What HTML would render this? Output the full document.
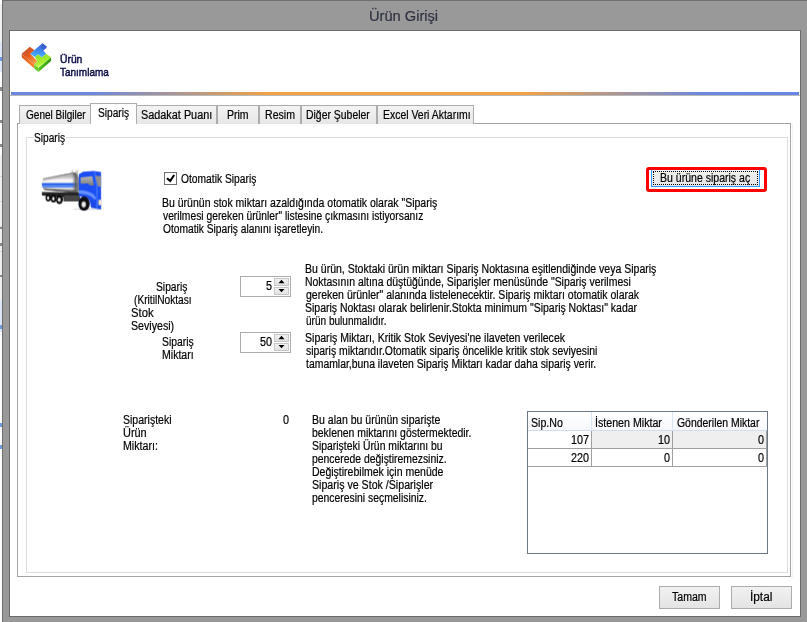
<!DOCTYPE html>
<html lang="tr"><head><meta charset="utf-8"><title>Ürün Girişi</title>
<style>
html,body{margin:0;padding:0}
body{width:807px;height:622px;overflow:hidden;position:relative;background:#999;font:12px/14px "Liberation Sans",sans-serif;color:#000}
div,span,svg{position:absolute;box-sizing:border-box}
.t{white-space:nowrap;transform-origin:0 0;-webkit-text-stroke:0.2px}
.tab{top:105px;height:19px;border:1px solid #acacac;border-bottom:none;background:linear-gradient(#f3f3f3,#e6e6e6)}
.btn{border:1px solid #acacac;background:linear-gradient(#f1f1f1,#e4e4e4)}
.spin{width:51px;height:21px;left:240px;border:1px solid #abadb3;background:#fff}
.sb{left:274px;width:15px;height:8px;background:linear-gradient(#f0f0f0,#e3e3e3);border:1px solid #c6c6c6}
.vl{width:1px;background:#a0a0a0}.hl{height:1px;background:#a0a0a0}
</style></head><body>
<!--STATIC-START-->
<div style="left:0;top:0px;width:2px;height:622px;background:#fff"></div>
<div style="left:0;top:4px;width:2px;height:38px;background:#f0f0f0"></div>
<div style="left:0;top:42px;width:2px;height:30px;background:#dde7f7"></div>
<div style="left:0;top:57px;width:2px;height:4px;background:#6f9be4"></div>
<div style="left:0;top:87px;width:2px;height:4px;background:#8a8a8a"></div>
<div style="left:0;top:120px;width:2px;height:3px;background:#8a8a8a"></div>
<div style="left:0;top:144px;width:2px;height:3px;background:#8a8a8a"></div>
<div style="left:0;top:155px;width:2px;height:145px;background:#efefef"></div>
<div style="left:0;top:176px;width:2px;height:1px;background:#d4d4d4"></div>
<div style="left:0;top:201px;width:2px;height:1px;background:#d4d4d4"></div>
<div style="left:0;top:226px;width:2px;height:1px;background:#d4d4d4"></div>
<div style="left:0;top:251px;width:2px;height:1px;background:#d4d4d4"></div>
<div style="left:0;top:276px;width:2px;height:1px;background:#d4d4d4"></div>
<div style="left:0;top:227px;width:2px;height:2px;background:#8a8a8a"></div>
<div style="left:0;top:243px;width:2px;height:3px;background:#8a8a8a"></div>
<div style="left:0;top:275px;width:2px;height:2px;background:#8a8a8a"></div>
<div style="left:0;top:300px;width:2px;height:32px;background:#dde7f7"></div>
<div style="left:0;top:325px;width:2px;height:4px;background:#6f9be4"></div>
<div style="left:0;top:423px;width:2px;height:4px;background:#6f9be4"></div>
<div style="left:0;top:445px;width:2px;height:4px;background:#6f9be4"></div>
<div style="left:2px;top:0;width:1px;height:622px;background:#6e6e6e"></div>
<div style="left:2px;top:0;width:805px;height:1px;background:#707070"></div>
<div id="client" style="left:9px;top:30px;width:792px;height:587px;border:1px solid #6b6b6b;background:#fff"></div>
<svg id="logo" style="left:16px;top:38px" width="40" height="40" viewBox="0 0 622 622">
<defs>
<linearGradient id="lr" x1="0" y1="0" x2="1" y2="1"><stop offset="0" stop-color="#b45a48"/><stop offset=".45" stop-color="#e2581a"/><stop offset="1" stop-color="#ffae5c"/></linearGradient>
<linearGradient id="lrs" x1="0" y1="0" x2="1" y2="1"><stop offset="0" stop-color="#d8501c"/><stop offset="1" stop-color="#ff8a30"/></linearGradient>
<linearGradient id="lb" x1="0.6" y1="0" x2="0.4" y2="1"><stop offset="0" stop-color="#3b5fd0"/><stop offset=".5" stop-color="#3f86f0"/><stop offset="1" stop-color="#4cb4ff"/></linearGradient>
<linearGradient id="lg" x1="0.2" y1="0" x2="0.6" y2="1"><stop offset="0" stop-color="#8adf28"/><stop offset=".6" stop-color="#a8ee30"/><stop offset="1" stop-color="#d8ff90"/></linearGradient>
<linearGradient id="lgs" x1="0" y1="0" x2="1" y2="0"><stop offset="0" stop-color="#55c41c"/><stop offset="1" stop-color="#2f9810"/></linearGradient>
<filter id="lbl"><feGaussianBlur stdDeviation="5"/></filter>
</defs>
<g filter="url(#lbl)">
<polygon points="88,245 285,412 285,474 92,302" fill="url(#lrs)"/>
<polygon points="88,245 215,135 290,190 222,243 335,360 285,412" fill="url(#lr)"/>
<polygon points="285,412 350,462 350,528 285,474" fill="#62cc22"/>
<polygon points="350,462 545,300 545,356 350,528" fill="url(#lgs)"/>
<polygon points="345,252 400,300 468,243 545,300 350,462 285,412 335,360 292,296" fill="url(#lg)"/>
<polygon points="410,82 482,135 425,195 468,243 400,300 345,252 292,296 222,243" fill="url(#lb)"/>
<polygon points="410,82 482,135 470,160 425,195 400,150" fill="#3555c4" opacity=".6"/>
</g>
</svg>
<div style="left:11px;top:92px;width:788px;height:3px;background:linear-gradient(90deg,#6a88e0 0%,#6a88e0 10%,#f2a242 33%,#f2a242 65%,#6a88e0 88%,#6586e6 100%)"></div>
<div style="left:10px;top:95px;width:790px;height:1px;background:#b9b9b9"></div>
<div style="left:792px;top:124px;width:1px;height:454px;background:#f3f3f3"></div>
<div id="page" style="left:17px;top:123px;width:774px;height:454px;border:1px solid #a3a3a3;background:#fff"></div>
<div class="tab" style="left:19px;width:73px"></div>
<div class="tab" style="left:135px;width:82px"></div>
<div class="tab" style="left:217px;width:42px"></div>
<div class="tab" style="left:259px;width:42px"></div>
<div class="tab" style="left:301px;width:76px"></div>
<div class="tab" style="left:377px;width:97px"></div>
<div id="seltab" style="left:90px;top:103px;width:47px;height:21px;border:1px solid #acacac;border-bottom:none;background:#fff"></div>
<div id="group" style="left:26px;top:137px;width:762px;height:436px;border:1px solid #dcdcdc"></div>
<div style="left:34px;top:137px;width:32px;height:1px;background:#fff"></div>
<svg id="truck" style="left:38px;top:162px" width="70" height="54" viewBox="0 0 806 622">
<defs>
<clipPath id="tc"><rect x="0" y="0" width="726" height="622"/></clipPath>
<linearGradient id="tk" x1="0" y1="0" x2="0" y2="1"><stop offset="0" stop-color="#5e5e5e"/><stop offset=".1" stop-color="#8e8e8e"/><stop offset=".22" stop-color="#c2c2c2"/><stop offset=".38" stop-color="#fbfbfb"/><stop offset=".5" stop-color="#f2f2f2"/><stop offset=".54" stop-color="#2b66ee"/><stop offset=".6" stop-color="#1e56e6"/><stop offset=".66" stop-color="#78a4f8"/><stop offset=".71" stop-color="#2a62ea"/><stop offset=".77" stop-color="#f8f8f8"/><stop offset=".86" stop-color="#9a9a9a"/><stop offset="1" stop-color="#1a1a1a"/></linearGradient>
<linearGradient id="te" x1="0" y1="0" x2="1" y2="0"><stop offset="0" stop-color="#777" stop-opacity="0"/><stop offset=".5" stop-color="#5a5a5a" stop-opacity=".85"/><stop offset="1" stop-color="#8a8a8a" stop-opacity=".95"/></linearGradient>
<linearGradient id="cb" x1="0" y1="0" x2="0" y2="1"><stop offset="0" stop-color="#1c4ef0"/><stop offset=".5" stop-color="#1d50f6"/><stop offset="1" stop-color="#1a48e0"/></linearGradient>
<linearGradient id="wn" x1="0" y1="0" x2="0" y2="1"><stop offset="0" stop-color="#b8b8b8"/><stop offset="1" stop-color="#7c7c7c"/></linearGradient>
<radialGradient id="hb"><stop offset="0" stop-color="#fff"/><stop offset=".55" stop-color="#e4e4e4"/><stop offset="1" stop-color="#666"/></radialGradient>
<filter id="tbl"><feGaussianBlur stdDeviation="3.2"/></filter>
</defs>
<g clip-path="url(#tc)" filter="url(#tbl)">
<ellipse cx="560" cy="545" rx="160" ry="14" fill="#000" opacity=".10"/>
<polygon points="45,345 480,350 480,452 292,452 292,405 45,385" fill="#262626"/>
<polygon points="300,385 470,385 470,452 300,452" fill="#474747"/>
<rect x="386" y="86" width="76" height="54" rx="8" fill="#c4c4c4"/><rect x="400" y="90" width="34" height="46" fill="#f0f0f0"/>
<ellipse cx="424" cy="94" rx="36" ry="8" fill="#fafafa"/>
<path d="M72,183 L400,122 Q472,114 472,230 L472,335 Q462,358 400,352 L75,320 Q44,300 44,252 Q44,200 72,183Z" fill="url(#tk)"/>
<polygon points="58,190 400,120 400,136 58,204" fill="#868686" opacity=".9"/><polygon points="52,204 400,136 400,156 50,220" fill="#bdbdbd" opacity=".85"/><polygon points="60,306 400,334 400,354 75,322" fill="#4a4a4a" opacity=".9"/><polygon points="50,292 400,316 400,334 60,306" fill="#a2a2a2" opacity=".8"/>
<path d="M390,124 Q472,114 472,230 L472,335 Q462,358 390,352Z" fill="url(#te)"/>
<ellipse cx="118" cy="412" rx="32" ry="44" fill="#0c0c0c"/><ellipse cx="116" cy="414" rx="15" ry="24" fill="url(#hb)"/>
<ellipse cx="178" cy="420" rx="34" ry="46" fill="#0c0c0c"/><ellipse cx="176" cy="422" rx="16" ry="25" fill="url(#hb)"/>
<ellipse cx="246" cy="432" rx="40" ry="54" fill="#0c0c0c"/><ellipse cx="244" cy="434" rx="19" ry="29" fill="url(#hb)"/>
<path d="M470,140 L520,112 L640,104 L726,114 L726,548 L610,528 L600,470 Q580,385 500,398 L470,400Z" fill="url(#cb)"/>
<path d="M470,325 Q560,320 640,370 Q665,390 668,430 L640,430 Q620,372 470,362Z" fill="#7ea6ff" opacity=".75"/>
<path d="M640,104 L660,112 L690,280 L690,540 L668,536 L668,290Z" fill="#3f74ff" opacity=".8"/>
<ellipse cx="530" cy="478" rx="66" ry="84" fill="#0d1230"/>
<ellipse cx="528" cy="487" rx="54" ry="68" fill="#0a0a0a"/><ellipse cx="526" cy="489" rx="30" ry="40" fill="url(#hb)"/>
<polygon points="490,178 624,164 644,266 602,270 572,246 490,250" fill="url(#wn)"/>
<polygon points="656,158 726,164 726,288 690,278" fill="#8e8e8e"/>
<rect x="696" y="436" width="30" height="60" fill="#f6e8c4"/>
</g>
</svg>
<div id="cb" style="left:164px;top:172px;width:13px;height:13px;border:1px solid #707070;background:#fff"></div>
<svg style="left:164px;top:172px" width="13" height="13" viewBox="0 0 13 13"><path d="M2.9 6.2 L6.2 8.9 L10.2 3" fill="none" stroke="#000" stroke-width="2.1"/></svg>
<div id="obtn" style="left:651px;top:169px;width:109px;height:18px;border:1px solid #3399ff;background:linear-gradient(#f0f0f0,#e6e6e6)"></div>
<div style="left:653px;top:171px;width:105px;height:14px;border:1px dotted #000"></div>
<div id="red" style="left:646px;top:167px;width:121px;height:25px;border:3px solid #ff0000;border-radius:3px"></div>
<div class="spin" style="top:276px"></div>
<div class="sb" style="top:278px"></div><div class="sb" style="top:287px"></div>
<svg style="left:274px;top:278px" width="15" height="17" viewBox="0 0 15 17"><path d="M7.5 1.8 L10.5 5.2 H4.5Z M4.5 10.9 H10.5 L7.5 14.3Z" fill="#000"/></svg>
<div class="spin" style="top:332px"></div>
<div class="sb" style="top:334px"></div><div class="sb" style="top:343px"></div>
<svg style="left:274px;top:334px" width="15" height="17" viewBox="0 0 15 17"><path d="M7.5 1.8 L10.5 5.2 H4.5Z M4.5 10.9 H10.5 L7.5 14.3Z" fill="#000"/></svg>
<div id="grid" style="left:527px;top:411px;width:241px;height:143px;border:1px solid #6f7887;background:#fff"></div>
<div style="left:528px;top:412px;width:239px;height:18px;background:linear-gradient(#fff,#f6f8fb)"></div>
<div style="left:528px;top:430px;width:239px;height:1px;background:#d4dfee"></div>
<div style="left:591px;top:412px;width:1px;height:19px;background:#dbe6f4"></div>
<div style="left:672px;top:412px;width:1px;height:19px;background:#dbe6f4"></div>
<div style="left:592px;top:431px;width:174px;height:17px;background:#efefef"></div>
<div class="hl" style="left:528px;top:448px;width:239px"></div>
<div class="hl" style="left:528px;top:466px;width:239px"></div>
<div class="vl" style="left:591px;top:431px;height:36px"></div>
<div class="vl" style="left:672px;top:431px;height:36px"></div>
<div class="vl" style="left:766px;top:431px;height:36px"></div>
<div class="btn" style="left:659px;top:586px;width:61px;height:23px"></div>
<div class="btn" style="left:731px;top:586px;width:61px;height:23px"></div>
<!--STATIC-END-->
<span class="t" id="title" style="left:369.30px;top:8px;font-size:14px;line-height:16px;color:#2f3242;transform:scaleX(1.0454)">Ürün Girişi</span>
<span class="t" id="h1" style="left:60.02px;top:53px;font-size:11px;line-height:13px;color:#0b0b45;-webkit-text-stroke:0.45px;transform:scaleX(0.9378)">Ürün</span>
<span class="t" id="h2" style="left:60.02px;top:66px;font-size:11px;line-height:13px;color:#0b0b45;-webkit-text-stroke:0.45px;transform:scaleX(0.9073)">Tanımlama</span>
<span class="t" id="tab1" style="left:25.62px;top:108px;transform:scaleX(0.8362)">Genel Bilgiler</span>
<span class="t" id="tab2" style="left:98.22px;top:106px;transform:scaleX(0.8476)">Sipariş</span>
<span class="t" id="tab3" style="left:140.55px;top:108px;transform:scaleX(0.9052)">Sadakat Puanı</span>
<span class="t" id="tab4" style="left:227.36px;top:108px;transform:scaleX(0.8770)">Prim</span>
<span class="t" id="tab5" style="left:265.02px;top:108px;transform:scaleX(0.8802)">Resim</span>
<span class="t" id="tab6" style="left:306.35px;top:108px;transform:scaleX(0.8696)">Diğer Şubeler</span>
<span class="t" id="tab7" style="left:383.02px;top:108px;transform:scaleX(0.8702)">Excel Veri Aktarımı</span>
<span class="t" id="gb" style="left:34.22px;top:131px;transform:scaleX(0.8476)">Sipariş</span>
<span class="t" id="chk" style="left:180.64px;top:172px;transform:scaleX(0.8559)">Otomatik Sipariş</span>
<span class="t" id="a1" style="left:162.30px;top:196px;transform:scaleX(0.8756)">Bu ürünün stok miktarı azaldığında otomatik olarak "Sipariş</span>
<span class="t" id="a2" style="left:163.02px;top:209px;transform:scaleX(0.8572)">verilmesi gereken ürünler" listesine çıkmasını istiyorsanız</span>
<span class="t" id="a3" style="left:163.02px;top:222px;transform:scaleX(0.8511)">Otomatik Sipariş alanını işaretleyin.</span>
<span class="t" id="btn" style="left:660.30px;top:171px;transform:scaleX(0.8778)">Bu ürüne sipariş aç</span>
<span class="t" id="l1" style="left:155.94px;top:280px;transform:scaleX(0.8566)">Sipariş</span>
<span class="t" id="l2" style="left:134.45px;top:293px;transform:scaleX(0.8477)">(KritilNoktası</span>
<span class="t" id="l3" style="left:130.74px;top:306px;transform:scaleX(0.9377)">Stok</span>
<span class="t" id="l4" style="left:130.74px;top:319px;transform:scaleX(0.8866)">Seviyesi)</span>
<span class="t" id="l5" style="left:161.94px;top:335px;transform:scaleX(0.8628)">Sipariş</span>
<span class="t" id="l6" style="left:162.30px;top:348px;transform:scaleX(0.8799)">Miktarı</span>
<span class="t" id="n1" style="left:266.45px;top:279px;transform:scaleX(0.9000)">5</span>
<span class="t" id="n2" style="left:260.19px;top:335px;transform:scaleX(0.9000)">50</span>
<span class="t" id="b1" style="left:305.40px;top:262px;transform:scaleX(0.8765)">Bu ürün, Stoktaki ürün miktarı Sipariş Noktasına eşitlendiğinde veya Sipariş</span>
<span class="t" id="b2" style="left:305.40px;top:275px;transform:scaleX(0.8715)">Noktasının altına düştüğünde, Siparişler menüsünde "Sipariş verilmesi</span>
<span class="t" id="b3" style="left:306.21px;top:288px;transform:scaleX(0.8755)">gereken ürünler" alanında listelenecektir. Sipariş miktarı otomatik olarak</span>
<span class="t" id="b4" style="left:305.22px;top:301px;transform:scaleX(0.8738)">Sipariş Noktası olarak belirlenir.Stokta minimum "Sipariş Noktası" kadar</span>
<span class="t" id="b5" style="left:306.21px;top:314px;transform:scaleX(0.8375)">ürün bulunmalıdır.</span>
<span class="t" id="c1" style="left:305.22px;top:331px;transform:scaleX(0.8793)">Sipariş Miktarı, Kritik Stok Seviyesi'ne ilaveten verilecek</span>
<span class="t" id="c2" style="left:306.21px;top:344px;transform:scaleX(0.8687)">sipariş miktarıdır.Otomatik sipariş öncelikle kritik stok seviyesini</span>
<span class="t" id="c3" style="left:306.21px;top:357px;transform:scaleX(0.8686)">tamamlar,buna ilaveten Sipariş Miktarı kadar daha sipariş verir.</span>
<span class="t" id="s1" style="left:122.74px;top:413px;transform:scaleX(0.8771)">Siparişteki</span>
<span class="t" id="s2" style="left:122.74px;top:426px;transform:scaleX(0.9114)">Ürün</span>
<span class="t" id="s3" style="left:122.74px;top:439px;transform:scaleX(0.8876)">Miktarı:</span>
<span class="t" id="s0" style="left:282.51px;top:413px;transform:scaleX(0.9000)">0</span>
<span class="t" id="d1" style="left:312.40px;top:413px;transform:scaleX(0.8783)">Bu alan bu ürünün siparişte</span>
<span class="t" id="d2" style="left:312.22px;top:426px;transform:scaleX(0.8689)">beklenen miktarını göstermektedir.</span>
<span class="t" id="d3" style="left:312.22px;top:439px;transform:scaleX(0.8669)">Siparişteki Ürün miktarını bu</span>
<span class="t" id="d4" style="left:312.04px;top:452px;transform:scaleX(0.8658)">pencerede değiştiremezsiniz.</span>
<span class="t" id="d5" style="left:312.40px;top:465px;transform:scaleX(0.8757)">Değiştirebilmek için menüde</span>
<span class="t" id="d6" style="left:312.22px;top:478px;transform:scaleX(0.8856)">Sipariş ve Stok /Siparişler</span>
<span class="t" id="d7" style="left:312.04px;top:491px;transform:scaleX(0.8655)">penceresini seçmelisiniz.</span>
<span class="t" id="th1" style="left:530.94px;top:416px;transform:scaleX(0.8834)">Sip.No</span>
<span class="t" id="th2" style="left:594.60px;top:416px;transform:scaleX(0.8878)">İstenen Miktar</span>
<span class="t" id="th3" style="left:676.62px;top:416px;transform:scaleX(0.8699)">Gönderilen Miktar</span>
<span class="t" id="r11" style="left:570.60px;top:433px;transform:scaleX(0.9000)">107</span>
<span class="t" id="r12" style="left:658.05px;top:433px;transform:scaleX(0.9000)">10</span>
<span class="t" id="r13" style="left:758.29px;top:433px;transform:scaleX(0.9000)">0</span>
<span class="t" id="r21" style="left:570.93px;top:451px;transform:scaleX(0.9000)">220</span>
<span class="t" id="r22" style="left:664.29px;top:451px;transform:scaleX(0.9000)">0</span>
<span class="t" id="r23" style="left:758.29px;top:451px;transform:scaleX(0.9000)">0</span>
<span class="t" id="ok" style="left:672.21px;top:590px;transform:scaleX(0.8809)">Tamam</span>
<span class="t" id="cancel" style="left:750.17px;top:590px;transform:scaleX(0.9854)">İptal</span>
</body></html>
